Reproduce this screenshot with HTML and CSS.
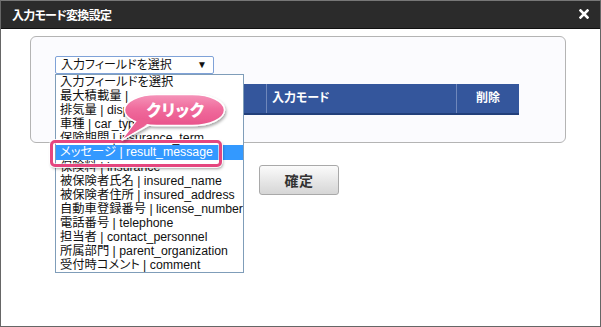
FILE: index.html
```html
<!DOCTYPE html>
<html lang="ja">
<head>
<meta charset="utf-8">
<link rel="stylesheet" href="styles.css">
</head>
<body>
<div class="window">
  <div class="titlebar">
    <span class="title">入力モード変換設定</span>
    <svg class="close" width="10" height="10" viewBox="0 0 10 10"><path d="M1.5 1.5 L8.5 8.5 M8.5 1.5 L1.5 8.5" stroke="#fff" stroke-width="2.6" stroke-linecap="square"/></svg>
  </div>
  <div class="body">
    <div class="panel">
      <div class="select-wrap">
        <div class="select"><span>入力フィールドを選択</span><span class="arrow">▼</span></div>
        <ul class="listbox">
          <li>入力フィールドを選択</li>
          <li>最大積載量 |</li>
          <li>排気量 | displacement</li>
          <li>車種 | car_type</li>
          <li>保険期間 | insurance_term</li>
          <li class="sel">メッセージ | result_message</li>
          <li>保険料 | insurance</li>
          <li>被保険者氏名 | insured_name</li>
          <li>被保険者住所 | insured_address</li>
          <li>自動車登録番号 | license_number</li>
          <li>電話番号 | telephone</li>
          <li>担当者 | contact_personnel</li>
          <li>所属部門 | parent_organization</li>
          <li>受付時コメント | comment</li>
        </ul>
      </div>
      <div class="thead">
        <div class="th c1"></div>
        <div class="th c2">入力モード</div>
        <div class="th c3">削除</div>
      </div>
    </div>
    <div class="actions"><button class="btn">確定</button></div>
  </div>
  <div class="frame"></div>
  <div class="callout">
    <svg width="130" height="62" viewBox="108 86 130 62">
      <defs>
        <linearGradient id="g" x1="0" y1="0" x2="0" y2="1">
          <stop offset="0" stop-color="#f595ba"/>
          <stop offset="0.45" stop-color="#f06c9d"/>
          <stop offset="1" stop-color="#e9548b"/>
        </linearGradient>
        <filter id="sh" x="-20%" y="-20%" width="140%" height="150%">
          <feDropShadow dx="1" dy="2" stdDeviation="1.5" flood-color="#000" flood-opacity="0.35"/>
        </filter>
      </defs>
      <g filter="url(#sh)">
        <path d="M138 119 L154 122 L122 140 Z" fill="url(#g)" stroke="#fff" stroke-width="1.5" stroke-linejoin="round"/>
        <rect x="124.5" y="94.5" width="100" height="31" rx="32" ry="15.5" fill="url(#g)" stroke="#fff" stroke-width="1.5"/>
        <path d="M139 118 L153 120.5 L123.5 138.5 Z" fill="#ec5e92"/>
      </g>
    </svg>
    <span class="callout-text">クリック</span>
  </div>
</div>
</body>
</html>
```
FILE: styles.css
```css
* { box-sizing: border-box; }
html, body { margin: 0; padding: 0; background: #fff; }
body {
  font-family: "Liberation Sans", "Noto Sans CJK JP", sans-serif;
  font-feature-settings: "palt";
  color: #111;
}
.window {
  position: relative;
  width: 601px;
  height: 327px;
  border: 1px solid #666;
  border-top-color: #777;
  background: #fff;
  overflow: hidden;
}
.titlebar {
  height: 28px;
  background: #2b2b2b;
  border-bottom: 1px solid #111;
  display: flex;
  align-items: center;
  justify-content: space-between;
  padding: 0 11px 1px 11px;
}
.title {
  color: #fff;
  font-weight: bold;
  font-size: 12px;
  letter-spacing: -0.7px;
}
.close { display: block; margin-right: 0; }
.body { padding: 7px 34px 0 29px; }
.panel {
  height: 107px;
  border: 1px solid #b4b4b4;
  border-radius: 6px;
  background: #fbfbfe;
  padding: 19px 0 0 24px;
}
.select-wrap { position: relative; width: 159px; z-index: 2; }
.select {
  height: 18px;
  border: 1px solid #7fa2d8;
  border-radius: 2px;
  background: #fff;
  display: flex;
  align-items: center;
  justify-content: space-between;
  padding: 0 6px 0 5px;
  font-size: 12px;
  line-height: 16px;
}
.arrow { font-size: 10px; color: #111; }
.listbox {
  position: absolute;
  left: 0;
  top: 18px;
  width: 189px;
  margin: 0;
  padding: 0;
  list-style: none;
  background: #fff;
  border: 1px solid #7f9db9;
  font-size: 12.3px;
  line-height: 14.1px;
}
.listbox li {
  padding-left: 4px;
  white-space: nowrap;
  overflow: hidden;
  height: 14.1px;
}
.listbox li.sel { background: #3399ff; color: #fff; }
.thead {
  margin-top: 10px;
  width: 464px;
  height: 31px;
  display: flex;
  background: #34569c;
  border-bottom: 2px solid #223f7a;
}
.th {
  color: #fff;
  font-weight: bold;
  font-size: 12px;
  line-height: 29px;
}
.c1 { width: 211px; }
.c2 { width: 190px; border-left: 1px solid #6f87bb; padding-left: 5px; }
.c3 { flex: 1; border-left: 1px solid #6f87bb; text-align: center; }
.actions { display: flex; justify-content: center; padding: 22px 0 0 0; margin-left: 2px; }
.btn {
  width: 80px;
  height: 30px;
  border: 1px solid #a9a9a9;
  border-radius: 3px;
  background: linear-gradient(#fbfbfb, #e6e6e6 55%, #d6d6d6);
  font-family: "Liberation Sans", "Noto Sans CJK JP", sans-serif;
  font-weight: bold;
  font-size: 14px;
  color: #333;
  letter-spacing: 0.5px;
  padding: 0;
}
.frame {
  position: absolute;
  left: 49px;
  top: 139px;
  width: 172px;
  height: 27px;
  border: 3px solid #e5467f;
  border-radius: 5px;
  box-shadow: 0 0 0 1px rgba(255,255,255,0.9), 1px 2px 3px rgba(0,0,0,0.35), inset 0 0 0 1px rgba(255,255,255,0.6);
  z-index: 3;
}
.callout {
  position: absolute;
  left: 107px;
  top: 85px;
  width: 130px;
  height: 62px;
  z-index: 4;
}
.callout svg { display: block; }
.callout-text {
  position: absolute;
  left: 17px;
  top: 9px;
  width: 101px;
  text-align: center;
  color: #fff;
  font-weight: 900;
  font-size: 16px;
  line-height: 31px;
  letter-spacing: 0.5px;
}
```
